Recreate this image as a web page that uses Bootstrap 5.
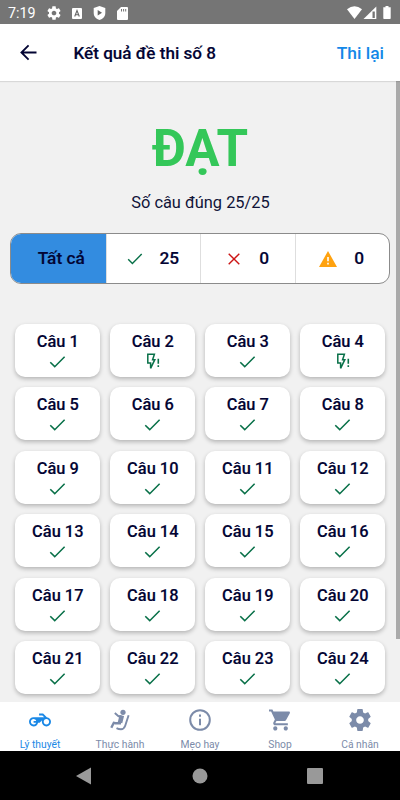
<!DOCTYPE html>
<html lang="vi">
<head>
<meta charset="utf-8">
<meta name="viewport" content="width=device-width, initial-scale=1">
<title>Kết quả đề thi số 8</title>
<link href="https://cdn.jsdelivr.net/npm/bootstrap@5.3.0/dist/css/bootstrap.min.css" rel="stylesheet">
<style>
  body { font-family: Roboto, "Liberation Sans", sans-serif; color: #020433; background: #f1f1f1; width: 400px; height: 800px; overflow: hidden; }
  svg { display: block; flex: none; }
  .statusbar { height: 24px; background: #757575; color: #fff; font-size: 14.3px; padding: 2px 8px 0; }
  .clock { padding-top: 1px; width: 28px; }
  .status-icons { gap: 11px; margin-left: 11px; }
  .titlebar { height: 57px; background: #fff; box-shadow: 0 1px 1px rgba(0,0,0,.1); z-index: 1; position: relative; padding: 0 16px 0 20px; }
  .titlebar h1 { font-size: 17.1px; font-weight: 500; margin: 2px 0 0 36.500px; -webkit-text-stroke: .15px; }
  .retry { color: #1388e8; font-size: 17.4px; font-weight: 500; text-decoration: none; padding-top: 2px; }
  .page-scroll { height: 621px; overflow: hidden; }
  .scroll-thumb { right: 0; top: 0; width: 4px; height: 558px; background: #aaa; }
  .verdict { color: #34c759; font-size: 51px; font-weight: 700; line-height: 60px; padding-top: 38px; }
  .score { font-size: 16.400px; line-height: 24px; margin-top: 12px; padding-left: 1px; color: #101338; }
  .filters { height: 51px; margin: 18px 10px 0; border: 1px solid #8b8b8b; border-radius: 11px; overflow: hidden; background: #fff; font-size: 17.3px; font-weight: 500; -webkit-text-stroke: .15px; }
  .filters > div { padding-top: 1px; }
  .filters > div + div { border-left: 1px solid #dedede; }
  .filters > .chosen { background: #338ce0; padding-left: 6px; width: 94.500px; }
  .filters .passed { gap: 17px; padding-left: 20px; width: 94.500px; }
  .filters .failed { gap: 19px; padding-left: 2px; width: 94.500px; }
  .filters .warned { gap: 17px; padding-right: 1px; width: 94.500px; }
  .answers { grid-template-columns: repeat(4, 85px); column-gap: 10px; row-gap: 10.4px; padding: 40px 15px 0 15.300px; }
  .answer { height: 53px; border-radius: 10px; background: #fff; box-shadow: 0 2px 4px rgba(0,0,0,.25); font-size: 16.4px; font-weight: 500; line-height: 20px; padding-top: 8px; -webkit-text-stroke: .15px; }
  .answer svg { margin-top: 1px; }
  .tabs { height: 49px; background: #fff; color: #7c8ba9; font-size: 10.3px; }
  .tabs > div { width: 80px; padding-top: 7px; }
  .tabs svg { height: 22px; }
  .tabs span { line-height: 12px; margin-top: 8px; white-space: nowrap; }
  .tabs .current { color: #1a88e6; }
  .sysnav { height: 49px; background: #000; }
</style>
</head>
<body>
<svg width="0" height="0" class="position-absolute">
  <symbol id="tick" viewBox="0 0 16 16"><path d="M1.2 8.3 5.4 12.4 14.7 3.1" fill="none" stroke="#087048" stroke-width="1.45"/></symbol>
  <symbol id="flash" viewBox="0 0 14 18"><path d="M1.800 1.300H8.400L6.600 6.700H8.800L4.600 15.300V9.900H1.800Z" fill="none" stroke="#087048" stroke-width="1.500"/><path d="M12.300 5.800V10.800M12.300 12.300V14" stroke="#087048" stroke-width="1.600"/></symbol>
  <symbol id="gear" viewBox="0 0 24 24"><path fill="currentColor" d="M19.43 12.98c.04-.32.07-.64.07-.98s-.03-.66-.07-.98l2.11-1.65c.19-.15.24-.42.12-.64l-2-3.46c-.12-.22-.39-.3-.61-.22l-2.49 1c-.52-.4-1.08-.73-1.69-.98l-.38-2.65C14.46 2.18 14.25 2 14 2h-4c-.25 0-.46.18-.49.42l-.38 2.65c-.61.25-1.17.59-1.69.98l-2.49-1c-.23-.09-.49 0-.61.22l-2 3.46c-.13.22-.07.49.12.64l2.11 1.65c-.04.32-.07.65-.07.98s.03.66.07.98l-2.11 1.65c-.19.15-.24.42-.12.64l2 3.46c.12.22.39.3.61.22l2.49-1c.52.4 1.08.73 1.69.98l.38 2.65c.03.24.24.42.49.42h4c.25 0 .46-.18.49-.42l.38-2.65c.61-.25 1.17-.59 1.69-.98l2.49 1c.23.09.49 0 .61-.22l2-3.46c.12-.22.07-.49-.12-.64l-2.11-1.65zM12 15.5c-1.93 0-3.5-1.57-3.5-3.5s1.57-3.5 3.5-3.5 3.5 1.57 3.5 3.5-1.57 3.5-3.5 3.5z"/></symbol>
</svg>

<div class="statusbar d-flex align-items-center">
  <span class="clock">7:19</span>
  <div class="status-icons d-flex align-items-center">
    <svg width="14" height="14" viewBox="1.500 1.500 21 21"><use href="#gear" width="24" height="24"/></svg>
    <svg width="10" height="11" viewBox="0 0 10 11"><rect width="10" height="11" rx="1" fill="#fff"/><path d="M2.7 8.5 5 2.6 7.3 8.5M3.5 6.8h3" fill="none" stroke="#666" stroke-width="1.1"/></svg>
    <svg width="13" height="14" viewBox="0 0 13 14"><path fill="#fff" d="M6.5 0 12.3 2v5c0 3.400-2.500 6-5.800 7C3.200 13 .7 10.400 .7 7V2z"/><path fill="#666" d="M4.700 4 9 6.700 4.700 9.400z"/></svg>
    <svg width="11" height="13" viewBox="0 0 11 13"><path fill="#fff" d="M4 0h6a1 1 0 0 1 1 1v11a1 1 0 0 1-1 1H1a1 1 0 0 1-1-1V4z"/><path stroke="#757575" stroke-width="1" d="M4.500 2v2.500M6.600 2v2.500M8.700 2v2.500"/></svg>
  </div>
  <svg class="ms-auto" width="45" height="14" viewBox="0 0 45 14"><path fill="#fff" d="M0 3.300Q7.500-2.900 15 3.300L7.500 13z"/><path fill="#fff" d="M16.500 13 29.300 .5V13z"/><path fill="#757575" d="M25.500 5.500h2.300V12h-2.300z"/><path fill="#fff" d="M38.500 0h3v1.300h2.200V12.300q0 .7-.7.700h-6q-.7 0-.7-.7V1.300h2.200z"/></svg>
</div>

<header class="titlebar d-flex align-items-center">
  <svg width="17" height="17" viewBox="0 0 17 17"><path d="M16.500 8.500H1.700M8.600 1.300 1.400 8.500 8.600 15.700" fill="none" stroke="#020433" stroke-width="1.800"/></svg>
  <h1>Kết quả đề thi số 8</h1>
  <a href="#" class="retry ms-auto">Thi lại</a>
</header>

<main class="page-scroll position-relative">
  <div class="scroll-thumb position-absolute"></div>
  <div class="verdict text-center">ĐẠT</div>
  <div class="score text-center">Số câu đúng 25/25</div>
  <div class="filters d-flex">
    <div class="chosen d-flex align-items-center justify-content-center">Tất cả</div>
    <div class="passed d-flex align-items-center"><svg width="16" height="16"><use href="#tick"/></svg>25</div>
    <div class="failed d-flex align-items-center justify-content-center"><svg width="12" height="12" viewBox="0 0 12 12"><path d="M.7.7l10.600 10.600M11.300.7.7 11.300" stroke="#cc1515" stroke-width="1.400"/></svg>0</div>
    <div class="warned d-flex align-items-center justify-content-center"><svg width="18" height="16" viewBox="0 0 18 16"><path fill="#ffa20f" d="M9 0 18 16H0z"/><path stroke="#fff" stroke-width="1.600" d="M9 6v4.300M9 11.800v1.700"/></svg>0</div>
  </div>
  <div class="answers d-grid" id="answers"></div>
</main>

<nav class="tabs d-flex">
  <div class="current d-flex flex-column align-items-center"><svg width="22" viewBox="0 0 24 24"><path fill="currentColor" d="M19.440 9.030L15.410 5H11v2h3.590l2 2H5c-2.800 0-5 2.200-5 5s2.200 5 5 5c2.460 0 4.450-1.690 4.900-4h1.650l2.770-2.770c-.21.54-.32 1.140-.32 1.770 0 2.800 2.200 5 5 5s5-2.200 5-5c0-2.650-1.970-4.770-4.560-4.970zM7.820 15C7.400 16.150 6.280 17 5 17c-1.630 0-3-1.370-3-3s1.370-3 3-3c1.280 0 2.400.85 2.820 2H5v2h2.820zM19 17c-1.660 0-3-1.340-3-3s1.340-3 3-3 3 1.340 3 3-1.340 3-3 3z"/></svg><span>Lý thuyết</span></div>
  <div class="d-flex flex-column align-items-center"><svg width="22" viewBox="0 0 22 22"><g fill="none" stroke="currentColor"><circle cx="14" cy="3.300" r="2.600" fill="currentColor" stroke="none"/><path stroke-width="1.900" d="M5.800 4 9.500 7.200h3"/><path stroke-width="4.600" d="M12.800 6.500 11 13.800"/><path stroke-width="2.400" d="M12 14.200H6.500L4.800 13.800 2.300 18.800"/><path stroke-width="1.900" d="M19.600 6.300 16.200 16.800Q15 20.300 12 20.300 9.500 20.300 7.500 19.200"/></g></svg><span>Thực hành</span></div>
  <div class="d-flex flex-column align-items-center"><svg width="22" viewBox="0 0 22 22"><circle cx="11" cy="11" r="9.800" fill="none" stroke="currentColor" stroke-width="2"/><path stroke="currentColor" stroke-width="2" d="M11 5.500v2.200M11 9.700v6.500"/></svg><span>Mẹo hay</span></div>
  <div class="d-flex flex-column align-items-center"><svg width="22" viewBox="1 2 21 20"><path fill="currentColor" d="M7 18c-1.100 0-1.990.9-1.990 2S5.900 22 7 22s2-.9 2-2-.9-2-2-2zM1 2v2h2l3.600 7.590-1.350 2.450c-.16.28-.25.61-.25.96 0 1.100.9 2 2 2h12v-2H7.420c-.14 0-.25-.11-.25-.25l.03-.12.900-1.630h7.450c.75 0 1.410-.41 1.750-1.030l3.580-6.490c.08-.14.12-.31.120-.48 0-.55-.45-1-1-1H5.210l-.94-2H1zm16 16c-1.100 0-1.990.9-1.990 2s.89 2 1.990 2 2-.9 2-2-.9-2-2-2z"/></svg><span>Shop</span></div>
  <div class="d-flex flex-column align-items-center"><svg width="22" viewBox="2 2 20 20"><use href="#gear" x="0" y="0" width="24" height="24"/></svg><span>Cá nhân</span></div>
</nav>

<footer class="sysnav d-flex align-items-center">
  <svg width="400" height="20" viewBox="0 0 400 20" fill="#999"><path d="M76 10 91 1.500v17z"/><circle cx="200" cy="10" r="7.500"/><rect x="307" y="2" width="16" height="16" rx="1"/></svg>
</footer>

<script src="https://cdn.jsdelivr.net/npm/bootstrap@5.3.0/dist/js/bootstrap.bundle.min.js"></script>
<script>
  const critical = [2, 4];
  document.getElementById('answers').innerHTML = Array.from({ length: 24 }, (_, i) => {
    const n = i + 1;
    const icon = critical.includes(n)
      ? '<svg width="14" height="18"><use href="#flash"/></svg>'
      : '<svg width="17" height="18"><use href="#tick"/></svg>';
    return `<div class="answer d-flex flex-column align-items-center"><span>Câu ${n}</span>${icon}</div>`;
  }).join('');
</script>
</body>
</html>
